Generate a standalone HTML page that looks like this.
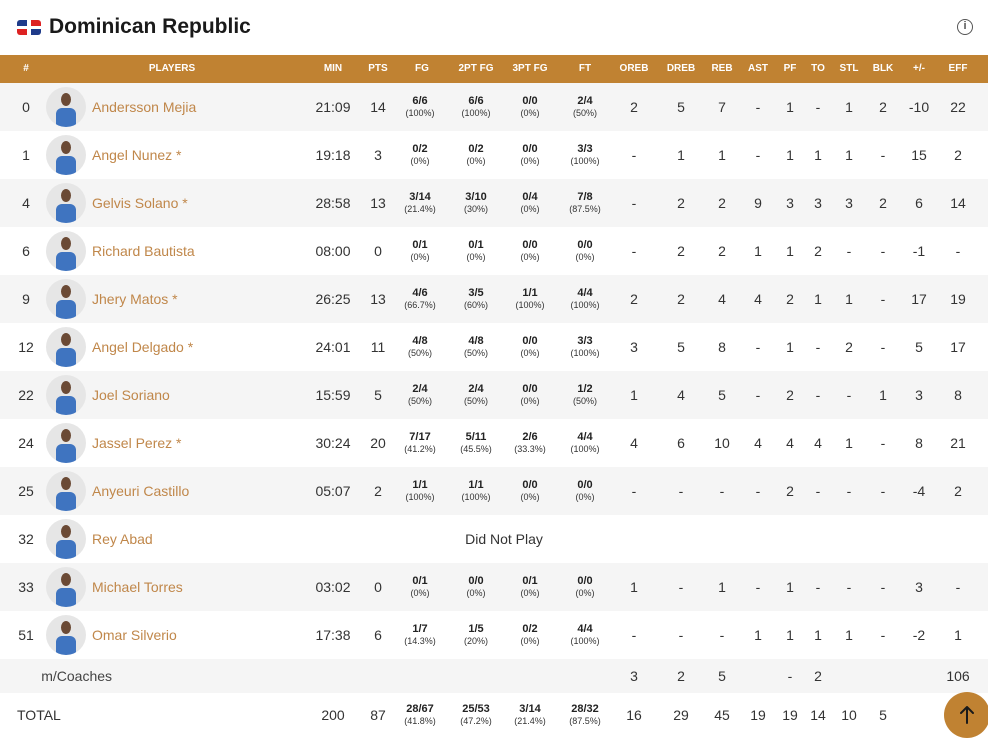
<!DOCTYPE html>
<html><head><meta charset="utf-8"><style>
*{margin:0;padding:0;box-sizing:border-box}
body{width:988px;height:736px;overflow:hidden;background:#fff;font-family:"Liberation Sans",Arial,sans-serif;color:#333;position:relative}
.title{position:absolute;left:49px;top:15px;font-size:21px;font-weight:bold;color:#1a1a1a}
.flag{position:absolute;left:17px;top:20px;width:24px;height:15px;border-radius:3px;overflow:hidden}
.info{position:absolute;left:957px;top:19px;width:16px;height:16px;border:1.5px solid #555;border-radius:50%;font-size:11px;text-align:center;line-height:13px;color:#555;font-weight:bold}
.hdr{position:absolute;left:0;top:55px;width:988px;height:28px;background:#c08232;color:#fff;font-size:10px;font-weight:bold}
.row{position:absolute;left:0;width:988px;height:48px}
.g{background:#f5f5f5}
.c{position:absolute;width:60px;text-align:center;top:50%;transform:translateY(-50%);font-size:14px;line-height:16px}
.hdr .c{font-size:10px}
.s b{display:block;font-size:11px;line-height:13px;color:#222}
.s i{display:block;font-style:normal;font-size:9px;line-height:11px;color:#333}
.nm{position:absolute;left:92px;top:50%;transform:translateY(-50%);color:#c0874a;font-size:14px}
.av{position:absolute;left:46px;top:4px;width:40px;height:40px;border-radius:50%;background:#e6e6e6;overflow:hidden}
.av:before{content:"";position:absolute;left:15px;top:6px;width:10px;height:13px;border-radius:50%;background:#6b4a35}
.av:after{content:"";position:absolute;left:10px;top:21px;width:20px;height:21px;border-radius:6px 6px 0 0;background:#3f74c0}
.up{position:absolute;left:944px;top:692px;width:46px;height:46px;border-radius:50%;background:#c08232}
</style></head><body>
<div class="flag"><svg width="24" height="15"><rect width="24" height="15" fill="#fff"/><rect x="0" y="0" width="10" height="6" fill="#1f3b8a"/><rect x="14" y="0" width="10" height="6" fill="#d22"/><rect x="0" y="9" width="10" height="6" fill="#d22"/><rect x="14" y="9" width="10" height="6" fill="#1f3b8a"/></svg></div>
<div class="title">Dominican Republic</div>
<div class="info">i</div>

<div class="hdr">
<div class="c" style="left:-4px">#</div>
<div class="c" style="left:142px;width:60px">PLAYERS</div>
<div class="c" style="left:303px">MIN</div>
<div class="c" style="left:348px">PTS</div>
<div class="c" style="left:392px">FG</div>
<div class="c" style="left:446px">2PT FG</div>
<div class="c" style="left:500px">3PT FG</div>
<div class="c" style="left:555px">FT</div>
<div class="c" style="left:604px">OREB</div>
<div class="c" style="left:651px">DREB</div>
<div class="c" style="left:692px">REB</div>
<div class="c" style="left:728px">AST</div>
<div class="c" style="left:760px">PF</div>
<div class="c" style="left:788px">TO</div>
<div class="c" style="left:819px">STL</div>
<div class="c" style="left:853px">BLK</div>
<div class="c" style="left:889px">+/-</div>
<div class="c" style="left:928px">EFF</div>
</div>

<div class="row g" style="top:83px"><div class="c" style="left:-4px">0</div><div class="av"></div><div class="nm">Andersson Mejia</div><div class="c" style="left:303px">21:09</div><div class="c" style="left:348px">14</div><div class="c s" style="left:390px"><b>6/6</b><i>(100%)</i></div><div class="c s" style="left:446px"><b>6/6</b><i>(100%)</i></div><div class="c s" style="left:500px"><b>0/0</b><i>(0%)</i></div><div class="c s" style="left:555px"><b>2/4</b><i>(50%)</i></div><div class="c" style="left:604px">2</div><div class="c" style="left:651px">5</div><div class="c" style="left:692px">7</div><div class="c" style="left:728px">-</div><div class="c" style="left:760px">1</div><div class="c" style="left:788px">-</div><div class="c" style="left:819px">1</div><div class="c" style="left:853px">2</div><div class="c" style="left:889px">-10</div><div class="c" style="left:928px">22</div></div>

<div class="row" style="top:131px"><div class="c" style="left:-4px">1</div><div class="av"></div><div class="nm">Angel Nunez *</div><div class="c" style="left:303px">19:18</div><div class="c" style="left:348px">3</div><div class="c s" style="left:390px"><b>0/2</b><i>(0%)</i></div><div class="c s" style="left:446px"><b>0/2</b><i>(0%)</i></div><div class="c s" style="left:500px"><b>0/0</b><i>(0%)</i></div><div class="c s" style="left:555px"><b>3/3</b><i>(100%)</i></div><div class="c" style="left:604px">-</div><div class="c" style="left:651px">1</div><div class="c" style="left:692px">1</div><div class="c" style="left:728px">-</div><div class="c" style="left:760px">1</div><div class="c" style="left:788px">1</div><div class="c" style="left:819px">1</div><div class="c" style="left:853px">-</div><div class="c" style="left:889px">15</div><div class="c" style="left:928px">2</div></div>

<div class="row g" style="top:179px"><div class="c" style="left:-4px">4</div><div class="av"></div><div class="nm">Gelvis Solano *</div><div class="c" style="left:303px">28:58</div><div class="c" style="left:348px">13</div><div class="c s" style="left:390px"><b>3/14</b><i>(21.4%)</i></div><div class="c s" style="left:446px"><b>3/10</b><i>(30%)</i></div><div class="c s" style="left:500px"><b>0/4</b><i>(0%)</i></div><div class="c s" style="left:555px"><b>7/8</b><i>(87.5%)</i></div><div class="c" style="left:604px">-</div><div class="c" style="left:651px">2</div><div class="c" style="left:692px">2</div><div class="c" style="left:728px">9</div><div class="c" style="left:760px">3</div><div class="c" style="left:788px">3</div><div class="c" style="left:819px">3</div><div class="c" style="left:853px">2</div><div class="c" style="left:889px">6</div><div class="c" style="left:928px">14</div></div>

<div class="row" style="top:227px"><div class="c" style="left:-4px">6</div><div class="av"></div><div class="nm">Richard Bautista</div><div class="c" style="left:303px">08:00</div><div class="c" style="left:348px">0</div><div class="c s" style="left:390px"><b>0/1</b><i>(0%)</i></div><div class="c s" style="left:446px"><b>0/1</b><i>(0%)</i></div><div class="c s" style="left:500px"><b>0/0</b><i>(0%)</i></div><div class="c s" style="left:555px"><b>0/0</b><i>(0%)</i></div><div class="c" style="left:604px">-</div><div class="c" style="left:651px">2</div><div class="c" style="left:692px">2</div><div class="c" style="left:728px">1</div><div class="c" style="left:760px">1</div><div class="c" style="left:788px">2</div><div class="c" style="left:819px">-</div><div class="c" style="left:853px">-</div><div class="c" style="left:889px">-1</div><div class="c" style="left:928px">-</div></div>

<div class="row g" style="top:275px"><div class="c" style="left:-4px">9</div><div class="av"></div><div class="nm">Jhery Matos *</div><div class="c" style="left:303px">26:25</div><div class="c" style="left:348px">13</div><div class="c s" style="left:390px"><b>4/6</b><i>(66.7%)</i></div><div class="c s" style="left:446px"><b>3/5</b><i>(60%)</i></div><div class="c s" style="left:500px"><b>1/1</b><i>(100%)</i></div><div class="c s" style="left:555px"><b>4/4</b><i>(100%)</i></div><div class="c" style="left:604px">2</div><div class="c" style="left:651px">2</div><div class="c" style="left:692px">4</div><div class="c" style="left:728px">4</div><div class="c" style="left:760px">2</div><div class="c" style="left:788px">1</div><div class="c" style="left:819px">1</div><div class="c" style="left:853px">-</div><div class="c" style="left:889px">17</div><div class="c" style="left:928px">19</div></div>

<div class="row" style="top:323px"><div class="c" style="left:-4px">12</div><div class="av"></div><div class="nm">Angel Delgado *</div><div class="c" style="left:303px">24:01</div><div class="c" style="left:348px">11</div><div class="c s" style="left:390px"><b>4/8</b><i>(50%)</i></div><div class="c s" style="left:446px"><b>4/8</b><i>(50%)</i></div><div class="c s" style="left:500px"><b>0/0</b><i>(0%)</i></div><div class="c s" style="left:555px"><b>3/3</b><i>(100%)</i></div><div class="c" style="left:604px">3</div><div class="c" style="left:651px">5</div><div class="c" style="left:692px">8</div><div class="c" style="left:728px">-</div><div class="c" style="left:760px">1</div><div class="c" style="left:788px">-</div><div class="c" style="left:819px">2</div><div class="c" style="left:853px">-</div><div class="c" style="left:889px">5</div><div class="c" style="left:928px">17</div></div>

<div class="row g" style="top:371px"><div class="c" style="left:-4px">22</div><div class="av"></div><div class="nm">Joel Soriano</div><div class="c" style="left:303px">15:59</div><div class="c" style="left:348px">5</div><div class="c s" style="left:390px"><b>2/4</b><i>(50%)</i></div><div class="c s" style="left:446px"><b>2/4</b><i>(50%)</i></div><div class="c s" style="left:500px"><b>0/0</b><i>(0%)</i></div><div class="c s" style="left:555px"><b>1/2</b><i>(50%)</i></div><div class="c" style="left:604px">1</div><div class="c" style="left:651px">4</div><div class="c" style="left:692px">5</div><div class="c" style="left:728px">-</div><div class="c" style="left:760px">2</div><div class="c" style="left:788px">-</div><div class="c" style="left:819px">-</div><div class="c" style="left:853px">1</div><div class="c" style="left:889px">3</div><div class="c" style="left:928px">8</div></div>

<div class="row" style="top:419px"><div class="c" style="left:-4px">24</div><div class="av"></div><div class="nm">Jassel Perez *</div><div class="c" style="left:303px">30:24</div><div class="c" style="left:348px">20</div><div class="c s" style="left:390px"><b>7/17</b><i>(41.2%)</i></div><div class="c s" style="left:446px"><b>5/11</b><i>(45.5%)</i></div><div class="c s" style="left:500px"><b>2/6</b><i>(33.3%)</i></div><div class="c s" style="left:555px"><b>4/4</b><i>(100%)</i></div><div class="c" style="left:604px">4</div><div class="c" style="left:651px">6</div><div class="c" style="left:692px">10</div><div class="c" style="left:728px">4</div><div class="c" style="left:760px">4</div><div class="c" style="left:788px">4</div><div class="c" style="left:819px">1</div><div class="c" style="left:853px">-</div><div class="c" style="left:889px">8</div><div class="c" style="left:928px">21</div></div>

<div class="row g" style="top:467px"><div class="c" style="left:-4px">25</div><div class="av"></div><div class="nm">Anyeuri Castillo</div><div class="c" style="left:303px">05:07</div><div class="c" style="left:348px">2</div><div class="c s" style="left:390px"><b>1/1</b><i>(100%)</i></div><div class="c s" style="left:446px"><b>1/1</b><i>(100%)</i></div><div class="c s" style="left:500px"><b>0/0</b><i>(0%)</i></div><div class="c s" style="left:555px"><b>0/0</b><i>(0%)</i></div><div class="c" style="left:604px">-</div><div class="c" style="left:651px">-</div><div class="c" style="left:692px">-</div><div class="c" style="left:728px">-</div><div class="c" style="left:760px">2</div><div class="c" style="left:788px">-</div><div class="c" style="left:819px">-</div><div class="c" style="left:853px">-</div><div class="c" style="left:889px">-4</div><div class="c" style="left:928px">2</div></div>

<div class="row" style="top:515px"><div class="c" style="left:-4px">32</div><div class="av"></div><div class="nm">Rey Abad</div><div class="c" style="left:444px;width:120px">Did Not Play</div></div>

<div class="row g" style="top:563px"><div class="c" style="left:-4px">33</div><div class="av"></div><div class="nm">Michael Torres</div><div class="c" style="left:303px">03:02</div><div class="c" style="left:348px">0</div><div class="c s" style="left:390px"><b>0/1</b><i>(0%)</i></div><div class="c s" style="left:446px"><b>0/0</b><i>(0%)</i></div><div class="c s" style="left:500px"><b>0/1</b><i>(0%)</i></div><div class="c s" style="left:555px"><b>0/0</b><i>(0%)</i></div><div class="c" style="left:604px">1</div><div class="c" style="left:651px">-</div><div class="c" style="left:692px">1</div><div class="c" style="left:728px">-</div><div class="c" style="left:760px">1</div><div class="c" style="left:788px">-</div><div class="c" style="left:819px">-</div><div class="c" style="left:853px">-</div><div class="c" style="left:889px">3</div><div class="c" style="left:928px">-</div></div>

<div class="row" style="top:611px"><div class="c" style="left:-4px">51</div><div class="av"></div><div class="nm">Omar Silverio</div><div class="c" style="left:303px">17:38</div><div class="c" style="left:348px">6</div><div class="c s" style="left:390px"><b>1/7</b><i>(14.3%)</i></div><div class="c s" style="left:446px"><b>1/5</b><i>(20%)</i></div><div class="c s" style="left:500px"><b>0/2</b><i>(0%)</i></div><div class="c s" style="left:555px"><b>4/4</b><i>(100%)</i></div><div class="c" style="left:604px">-</div><div class="c" style="left:651px">-</div><div class="c" style="left:692px">-</div><div class="c" style="left:728px">1</div><div class="c" style="left:760px">1</div><div class="c" style="left:788px">1</div><div class="c" style="left:819px">1</div><div class="c" style="left:853px">-</div><div class="c" style="left:889px">-2</div><div class="c" style="left:928px">1</div></div>

<div class="row g" style="top:659px;height:34px"><div class="c" style="left:14px;width:120px;text-align:left;color:#444">&nbsp;&nbsp;&nbsp;&nbsp;&nbsp;&nbsp;&nbsp;m/Coaches</div><div class="c" style="left:604px">3</div><div class="c" style="left:651px">2</div><div class="c" style="left:692px">5</div><div class="c" style="left:760px">-</div><div class="c" style="left:788px">2</div><div class="c" style="left:928px">106</div></div>

<div class="row" style="top:693px;height:43px"><div class="c" style="left:17px;width:80px;text-align:left">TOTAL</div><div class="c" style="left:303px">200</div><div class="c" style="left:348px">87</div><div class="c s" style="left:390px"><b>28/67</b><i>(41.8%)</i></div><div class="c s" style="left:446px"><b>25/53</b><i>(47.2%)</i></div><div class="c s" style="left:500px"><b>3/14</b><i>(21.4%)</i></div><div class="c s" style="left:555px"><b>28/32</b><i>(87.5%)</i></div><div class="c" style="left:604px">16</div><div class="c" style="left:651px">29</div><div class="c" style="left:692px">45</div><div class="c" style="left:728px">19</div><div class="c" style="left:760px">19</div><div class="c" style="left:788px">14</div><div class="c" style="left:819px">10</div><div class="c" style="left:853px">5</div></div>

<div class="up"><svg width="46" height="46"><path d="M23 31 V15 M17 21 L23 15 L29 21" stroke="#1a1a1a" stroke-width="2" fill="none" stroke-linecap="round" stroke-linejoin="round"/></svg></div>
</body></html>
